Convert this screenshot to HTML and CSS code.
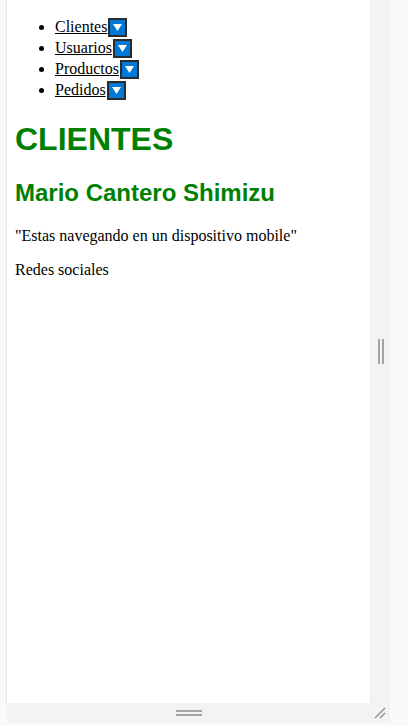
FILE: index.html
```html
<!DOCTYPE html>
<html lang="es">
<head>
<meta charset="utf-8">
<title>Clientes</title>
<link rel="stylesheet" href="styles.css">
</head>
<body>
<div class="shell">
  <div class="row-top">
    <div class="left-edge"></div>
    <div class="frame">
      <div class="page">
        <ul class="menu">
          <li><a href="#">Clientes</a><button class="drop" type="button"><svg width="9" height="7" viewBox="0 0 9 7"><polygon points="0,0 9,0 4.5,7" fill="#fff"/></svg></button></li>
          <li><a href="#">Usuarios</a><button class="drop" type="button"><svg width="9" height="7" viewBox="0 0 9 7"><polygon points="0,0 9,0 4.5,7" fill="#fff"/></svg></button></li>
          <li><a href="#">Productos</a><button class="drop" type="button"><svg width="9" height="7" viewBox="0 0 9 7"><polygon points="0,0 9,0 4.5,7" fill="#fff"/></svg></button></li>
          <li><a href="#">Pedidos</a><button class="drop" type="button"><svg width="9" height="7" viewBox="0 0 9 7"><polygon points="0,0 9,0 4.5,7" fill="#fff"/></svg></button></li>
        </ul>
        <h1 class="title">CLIENTES</h1>
        <h2 class="subtitle">Mario Cantero Shimizu</h2>
        <p class="text">"Estas navegando en un dispositivo mobile"</p>
        <p class="text">Redes sociales</p>
      </div>
    </div>
    <div class="vbar"><span class="vgrip"></span></div>
  </div>
  <div class="hbar">
    <span class="hgrip"></span>
    <svg class="corner" width="12" height="12" viewBox="0 0 12 12"><line x1="1" y1="11" x2="11" y2="1" stroke="#9a9a9a" stroke-width="1.6"/><line x1="6" y1="11" x2="11" y2="6" stroke="#9a9a9a" stroke-width="1.6"/></svg>
  </div>
</div>
</body>
</html>
```

FILE: styles.css
```css
html, body {
  margin: 0;
  padding: 0;
  background: #f8f9fa;
}
.shell {
  width: 408px;
  height: 726px;
  overflow: hidden;
}
.row-top {
  display: flex;
  height: 703px;
}
.left-edge {
  width: 6px;
  border-right: 1px solid #e3e5e7;
  background: #f8f9fa;
}
.frame {
  width: 363px;
  background: #fff;
  overflow: hidden;
  border-right: 1px solid #eceef0;
}
.page {
  margin: 8px;
  font-family: "Liberation Serif", "Times New Roman", serif;
  font-size: 16px;
  color: #000;
}
.menu {
  margin: 16px 0;
  padding-left: 40px;
}
.menu li {
  line-height: 21px;
  height: 21px;
}
.menu a {
  color: #000;
  text-decoration: underline;
}
.drop {
  display: inline-flex;
  align-items: center;
  justify-content: center;
  width: 19px;
  height: 19px;
  padding: 0;
  margin: 0 0 0 1px;
  border: 2px solid #2b2b2b;
  background: #0078d7;
  vertical-align: text-top;
  box-sizing: border-box;
}
.title {
  font-family: "Liberation Sans", Arial, sans-serif;
  font-size: 32px;
  font-weight: bold;
  color: #008000;
  margin: 21px 0;
}
.subtitle {
  font-family: "Liberation Sans", Arial, sans-serif;
  font-size: 24px;
  font-weight: bold;
  color: #008000;
  margin: 20px 0;
}
.text {
  margin: 16px 0;
}
.vbar {
  width: 19px;
  background: #f1f3f4;
  display: flex;
  align-items: center;
  justify-content: center;
}
.vgrip {
  width: 2px;
  height: 25px;
  border-left: 2px solid #a4a4a4;
  border-right: 2px solid #a4a4a4;
}
.hbar {
  margin-left: 7px;
  width: 383px;
  height: 20px;
  background: #f1f3f4;
  position: relative;
  display: flex;
  align-items: center;
}
.hgrip {
  width: 26px;
  height: 2px;
  border-top: 2px solid #a4a4a4;
  border-bottom: 2px solid #a4a4a4;
  margin-left: 169px;
}
.corner {
  position: absolute;
  right: 4px;
  bottom: 4px;
}
```
